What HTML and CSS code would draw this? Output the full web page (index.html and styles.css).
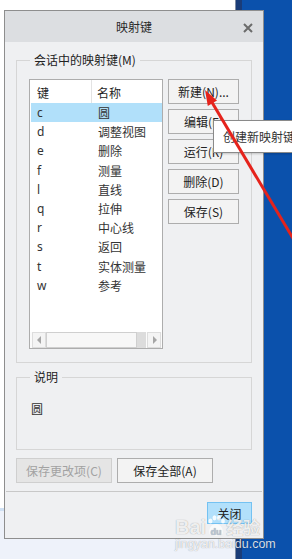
FILE: index.html
```html
<!DOCTYPE html>
<html lang="zh">
<head>
<meta charset="utf-8">
<title>映射键</title>
<link rel="stylesheet" href="styles.css">
</head>
<body>
<div class="dialog">
  <div class="titlebar">
    <span class="title">映射键</span>
    <svg class="close-x" width="10" height="10" viewBox="0 0 10 10"><path d="M1 1 L9 9 M9 1 L1 9" stroke="#6b6b6b" stroke-width="2" fill="none"/></svg>
  </div>
  <div class="body">
    <div class="group group-keys">
      <span class="group-label">会话中的映射键(M)</span>
      <div class="keys-row">
        <div class="listbox">
          <div class="list-head">
            <div class="col-key">键</div>
            <div class="col-name">名称</div>
          </div>
          <div class="list-rows">
            <div class="row selected"><span class="col-key">c</span><span class="col-name">圆</span></div>
            <div class="row"><span class="col-key">d</span><span class="col-name">调整视图</span></div>
            <div class="row"><span class="col-key">e</span><span class="col-name">删除</span></div>
            <div class="row"><span class="col-key">f</span><span class="col-name">测量</span></div>
            <div class="row"><span class="col-key">l</span><span class="col-name">直线</span></div>
            <div class="row"><span class="col-key">q</span><span class="col-name">拉伸</span></div>
            <div class="row"><span class="col-key">r</span><span class="col-name">中心线</span></div>
            <div class="row"><span class="col-key">s</span><span class="col-name">返回</span></div>
            <div class="row"><span class="col-key">t</span><span class="col-name">实体测量</span></div>
            <div class="row"><span class="col-key">w</span><span class="col-name">参考</span></div>
          </div>
          <div class="hscroll">
            <div class="sb-arrow"><svg width="5" height="8" viewBox="0 0 5 8"><path d="M4 0 L0 4 L4 8 Z" fill="#a6a6a6"/></svg></div>
            <div class="sb-thumb"></div>
            <div class="sb-track"></div>
            <div class="sb-arrow"><svg width="5" height="8" viewBox="0 0 5 8"><path d="M1 0 L5 4 L1 8 Z" fill="#a6a6a6"/></svg></div>
          </div>
        </div>
        <div class="side-buttons">
          <button class="btn">新建(N)...</button>
          <button class="btn">编辑(E)</button>
          <button class="btn">运行(R)</button>
          <button class="btn">删除(D)</button>
          <button class="btn">保存(S)</button>
        </div>
      </div>
    </div>
    <div class="group group-desc">
      <span class="group-label">说明</span>
      <div class="desc-text">圆</div>
    </div>
    <div class="save-row">
      <button class="btn wide disabled">保存更改项(C)</button>
      <button class="btn wide">保存全部(A)</button>
    </div>
    <div class="separator"></div>
    <div class="close-row">
      <button class="btn close-btn">关闭</button>
    </div>
  </div>
</div>

<div class="tooltip">创建新映射键</div>

<svg class="red-arrow" width="292" height="559" viewBox="0 0 292 559">
  <line x1="210" y1="99" x2="294" y2="240" stroke="#e5231c" stroke-width="3"/>
  <polygon points="205,90 207.8,106 217,100.5" fill="#e5231c"/>
</svg>

<div class="watermark">
  <div class="wm-top"><span class="wm-bai">Bai</span><svg class="wm-paw" width="18" height="22" viewBox="0 0 18 22"><ellipse cx="3.5" cy="6" rx="2" ry="2.6" fill="rgba(255,255,255,0.85)"/><ellipse cx="7.5" cy="2.8" rx="2" ry="2.6" fill="rgba(255,255,255,0.85)"/><ellipse cx="12" cy="2.8" rx="2" ry="2.6" fill="rgba(255,255,255,0.85)"/><ellipse cx="16" cy="6" rx="1.9" ry="2.6" fill="rgba(255,255,255,0.85)"/><path d="M9 9 C4 9 1 15 2.5 19 C4.5 21.5 13.5 21.5 15.5 19 C17 15 14 9 9 9 Z" fill="rgba(255,255,255,0.7)"/><text x="9" y="19.5" text-anchor="middle" class="wm-du">du</text></svg><span class="wm-jy">经验</span></div>
  <div class="wm-url">jingyan.baidu.com</div>
</div>
</body>
</html>
```
FILE: styles.css
```css
html, body {
  margin: 0;
  padding: 0;
}
body {
  width: 292px;
  height: 559px;
  overflow: hidden;
  position: relative;
  font-family: "Noto Sans", "Noto Sans CJK SC", sans-serif;
  font-size: 12px;
  color: #1e1e1e;
  background:
    linear-gradient(to right, transparent 0 235px, #7f8ca3 235px 236px, #1a3c78 236px 242px, #0b51ac 242px),
    linear-gradient(to bottom, #ffffff 0 508px, #cfe0f3 508px 511px, #eef2fa 511px);
  padding-top: 10px;
  box-sizing: border-box;
}
.dialog {
  margin-left: 4px;
  width: 258px;
  height: 527px;
  border: 1px solid #8e8e8e;
  background: #eff0f2;
  display: flex;
  flex-direction: column;
}
.titlebar {
  height: 31px;
  background: #dcdee1;
  display: flex;
  align-items: center;
  justify-content: center;
  position: relative;
  flex: none;
}
.title {
  font-family: "Noto Sans CJK SC", sans-serif;
  font-size: 12px;
  color: #2a2a2a;
}
.close-x {
  position: absolute;
  right: 10px;
  top: 12px;
}
.body {
  padding: 0 11px;
  display: flex;
  flex-direction: column;
}
.group {
  border: 1px solid #d6d6d6;
  position: relative;
  box-sizing: border-box;
}
.group-label {
  position: absolute;
  top: -9px;
  left: 13px;
  padding: 0 4px;
  line-height: 16px;
  background: #eff0f2;
  font-family: "Noto Sans CJK SC", sans-serif;
  color: #222;
}
.group-keys {
  margin-top: 18px;
  height: 303px;
  padding: 18px 11px 13px 12px;
}
.keys-row {
  display: flex;
  gap: 5px;
}
.listbox {
  width: 134px;
  height: 270px;
  box-sizing: border-box;
  border: 1px solid #adadad;
  background: #fff;
  display: flex;
  flex-direction: column;
}
.list-head {
  height: 23px;
  display: flex;
  flex: none;
}
.list-head .col-key {
  width: 62px;
  padding-left: 7px;
  box-sizing: border-box;
  border-right: 1px solid #e3e3e3;
  line-height: 25px;
  font-family: "Noto Sans CJK SC", sans-serif;
}
.list-head .col-name {
  padding-left: 5px;
  line-height: 25px;
  font-family: "Noto Sans CJK SC", sans-serif;
}
.list-rows {
  flex: 1;
}
.row {
  height: 19.2px;
  display: flex;
  align-items: center;
  margin-left: 1px;
}
.row.selected {
  background: #b1e0fa;
}
.row .col-key {
  width: 62px;
  padding-left: 6px;
  box-sizing: border-box;
  color: #333;
}
.row .col-name {
  padding-left: 5px;
  font-family: "Noto Sans CJK SC", sans-serif;
  color: #333;
}
.hscroll {
  height: 16px;
  flex: none;
  display: flex;
  padding: 0 1px 0 2px;
  background: #fbfbfb;
}
.sb-arrow {
  width: 14px;
  box-sizing: border-box;
  border: 1px solid #dddddd;
  background: #f4f4f4;
  display: flex;
  align-items: center;
  justify-content: center;
}
.sb-thumb {
  width: 91px;
  box-sizing: border-box;
  border: 1px solid #cfcfcf;
  background: #f7f7f7;
}
.sb-track {
  flex: 1;
  background: #dcdcdc;
  margin-right: 1px;
}
.side-buttons {
  display: flex;
  flex-direction: column;
  gap: 5px;
}
.btn {
  font-family: "Noto Sans CJK SC", sans-serif;
  font-size: 12px;
  color: #222;
  background: #f3f3f3;
  border: 1px solid #adadad;
  border-radius: 0;
  padding: 0;
  margin: 0;
}
.side-buttons .btn {
  width: 71px;
  height: 25px;
}
.group-desc {
  margin-top: 14px;
  height: 73px;
  padding: 23px 12px 0 14px;
}
.desc-text {
  font-family: "Noto Sans CJK SC", sans-serif;
  line-height: 16px;
  color: #333;
}
.save-row {
  margin-top: 8px;
  display: flex;
  gap: 5px;
}
.btn.wide {
  width: 96px;
  height: 25px;
}
.btn.disabled {
  background: #e5e5e5;
  border-color: #cfcfcf;
  color: #a2a2a2;
}
.separator {
  margin: 8px -10px 0 -10px;
  height: 1px;
  background: #c8c8c8;
}
.close-row {
  display: flex;
  justify-content: flex-end;
  margin-top: 10px;
}
.btn.close-btn {
  width: 45px;
  height: 22px;
  background: #b2e0fb;
  border-color: #74c2f2;
}
.tooltip {
  position: absolute;
  left: 213px;
  top: 120px;
  width: 100px;
  height: 33px;
  box-sizing: border-box;
  border: 1px solid #8a8a8a;
  background: #ffffff;
  padding-left: 9px;
  line-height: 31px;
  font-family: "Noto Sans CJK SC", sans-serif;
  font-size: 12px;
  color: #333;
  box-shadow: 1px 1px 2px rgba(0,0,0,0.2);
  white-space: nowrap;
}
.red-arrow {
  position: absolute;
  left: 0;
  top: 0;
  pointer-events: none;
}
.watermark {
  position: absolute;
  left: 175px;
  top: 515px;
  color: rgba(255,255,255,0.85);
  text-shadow: 0 0 1px rgba(0,0,0,0.4);
  pointer-events: none;
}
.wm-top {
  display: flex;
  align-items: flex-end;
  height: 22px;
}
.wm-bai {
  font-family: "Liberation Sans", sans-serif;
  font-weight: bold;
  font-size: 20px;
  line-height: 20px;
}
.wm-paw {
  margin: 0 0 0 1px;
}
.wm-du {
  font-family: "Liberation Sans", sans-serif;
  font-weight: bold;
  font-size: 9px;
  fill: #b8c4d4;
}
.wm-jy {
  font-family: "Noto Sans CJK SC", sans-serif;
  font-weight: bold;
  font-size: 17px;
  line-height: 20px;
  margin-left: 1px;
}
.wm-url {
  font-family: "Liberation Sans", sans-serif;
  font-size: 12.5px;
  line-height: 14px;
}
```
